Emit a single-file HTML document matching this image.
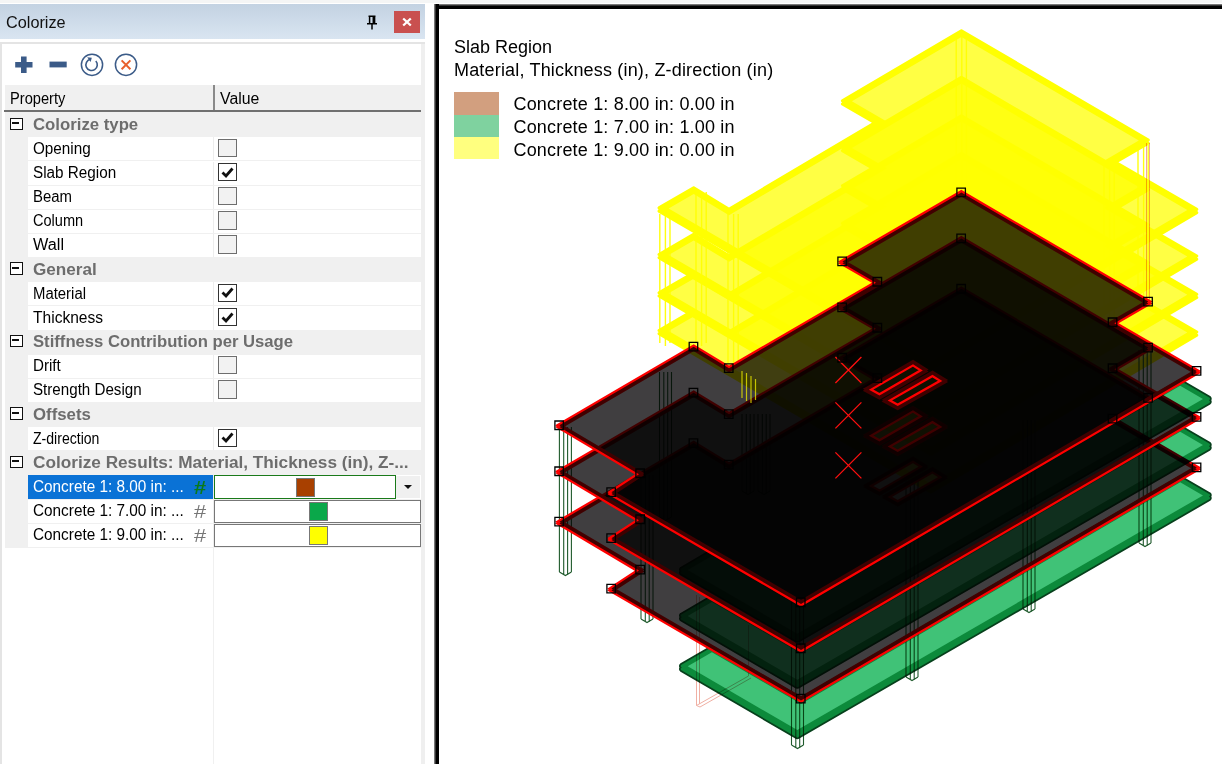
<!DOCTYPE html>
<html><head><meta charset="utf-8"><title>Colorize</title>
<style>
html,body{margin:0;padding:0}
body{width:1222px;height:764px;overflow:hidden;background:#fff;position:relative;font-family:"Liberation Sans",sans-serif;color:#000}
.topstrip{position:absolute;left:0;top:0;width:1222px;height:3px;background:#f4f5f5}
.title{position:absolute;left:0;top:4px;width:425px;height:35px;background:linear-gradient(#c3d2e2,#d9e5f1)}
.title .t{position:absolute;top:9.5px;font-size:16px;line-height:18px;color:#111;transform-origin:0 0;white-space:nowrap}
.close{position:absolute;left:394px;top:7px;width:26px;height:22px;background:#c9504f}
.close svg{position:absolute;left:8px;top:6px}
.pin{position:absolute;left:366px;top:11px}
.panel{position:absolute;left:0;top:42px;width:425px;height:722px;background:#fff;border-left:2px solid #e4e4e4;border-top:2px solid #e4e4e4;box-sizing:border-box}
.panel .rb{position:absolute;left:421px;top:42px;width:4px;height:722px;background:#ececec}
.tb{position:absolute;top:0;left:0}
.hdr{position:absolute;left:5px;top:85px;width:416px;height:28.5px;background:#f0f0f0}
.hdr span{position:absolute;top:4.5px;font-size:16px;line-height:18px;transform-origin:0 0;white-space:nowrap}
.hline{position:absolute;left:4px;top:110.3px;width:417px;height:2px;background:#707070}
.hsep{position:absolute;left:213px;top:85px;width:1.5px;height:26px;background:#8a8a8a}
.gutter{position:absolute;left:5px;top:112px;width:23px;height:436px;background:#f0f0f0}
.vsep{position:absolute;left:213px;top:548px;width:1px;height:217px;background:#f0f0f0}
.row.prop:before{content:'';position:absolute;left:185px;top:0;width:1px;height:100%;background:#ededed}
.row{position:absolute;left:5px;width:416px;box-sizing:border-box}
.row.cat{background:#f0f0f0}
.row.prop{left:28px;width:393px;border-bottom:1px solid #f0f0f0;background:#fff}
.exp{position:absolute;left:5px;top:4.4px;width:12.5px;height:12.5px;border:1.8px solid #111;box-sizing:border-box;background:#fff}
.exp i{position:absolute;left:1.4px;top:3.4px;width:6.4px;height:2px;background:#111}
.ct{position:absolute;top:2.9px;font-size:16px;line-height:18px;font-weight:bold;color:#6d6d6d;white-space:nowrap;transform-origin:0 0}
.pn{position:absolute;top:2.4px;font-size:16px;line-height:18px;white-space:nowrap;transform-origin:0 0}
.cb{position:absolute;left:190.3px;top:1.5px;width:18.5px;height:18.3px;box-sizing:border-box;border:1.5px solid #6e6e6e;background:#f2f2f2}
.cb.on{background:#fff;border-color:#333}
.cb svg{position:absolute;left:-1.3px;top:-1.3px}
.vline{position:absolute;left:185px;top:0;width:1px;height:100%;background:#e8e8e8}
.col.sel{background:linear-gradient(90deg,#0a72d6 185px,#fff 185px)}
.col.sel .pn{color:#fff}
.hash{position:absolute;left:165.5px;top:1.5px;font-size:19px;line-height:21px;color:#777;transform:scaleX(1.15);transform-origin:0 0}
.col.sel .hash{color:#0a7a1a;font-weight:bold}
.cbox{position:absolute;left:186px;top:0;width:207px;height:23.5px;box-sizing:border-box;border:1.5px solid #777;background:#fff}
.col.sel .cbox{width:182px;border-color:#1a7a1a;border-width:1.5px}
.cbox b{position:absolute;left:93.5px;top:1.2px;width:19.5px;height:19.3px;border:1px solid #777;box-sizing:border-box}
.col.sel .cbox b{left:81px;width:19px}
.dd{position:absolute;left:368px;top:1px;width:24px;height:22px;background:#f0f0f0}
.dd:after{content:"";position:absolute;left:8px;top:9px;border:4px solid transparent;border-top:4.5px solid #111;border-bottom:0}
.view{position:absolute;left:434px;top:4px;width:788px;height:760px;background:#fff;box-sizing:border-box}
.vb1{position:absolute;left:434px;top:4px;width:788px;height:5px;background:linear-gradient(#9a9a9a,#000 45%)}
.vb2{position:absolute;left:434px;top:4px;width:5px;height:760px;background:linear-gradient(90deg,#9a9a9a,#000 45%)}
.legend{position:absolute;font-size:18px;white-space:nowrap;color:#000}
.sw{position:absolute;left:454px;width:45px}
svg.model{position:absolute;left:439px;top:9px}
.mul{mix-blend-mode:multiply}
</style></head><body>
<div class="topstrip"></div>
<div class="title"><span class="t" style="left:5.7px;transform:scaleX(1.016)">Colorize</span>
 <svg class="pin" width="12" height="16" viewBox="0 0 12 16"><path d="M2.5 1.2h7M3.6 1.2v7.3M8.6 1.2v7.3M7.3 1.2v7.3M1 8.8h10M6 9v5.5" stroke="#000" stroke-width="1.5" fill="none"/></svg>
 <div class="close"><svg width="10" height="10" viewBox="0 0 10 10"><path d="M1.2 1.5L8.8 8.5M8.8 1.5L1.2 8.5" stroke="#fff" stroke-width="2.3"/></svg></div>
</div>
<div class="panel"></div><div class="rb" style="position:absolute;left:421px;top:44px;width:4px;height:720px;background:#efefef"></div>
<svg class="tb" width="160" height="84" viewBox="0 0 160 84">
 <path d="M21 56.5h5.6v5.4h5.9v5.6h-5.9v5.5H21v-5.5h-5.8v-5.6H21z" fill="#3b5b88"/>
 <rect x="49.5" y="61.6" width="17.2" height="5.8" fill="#3b5b88"/>
 <circle cx="92" cy="64.8" r="10.6" fill="#fff" stroke="#3b5b88" stroke-width="1.5"/>
 <path d="M90.2 59.3a5.7 5.7 0 1 0 5.6 1.7" fill="none" stroke="#3b5b88" stroke-width="1.6"/>
 <path d="M87.2 57.2l4.6 .6-1.2 4.2z" fill="#3b5b88"/>
 <circle cx="126" cy="64.8" r="10.6" fill="#fff" stroke="#3b5b88" stroke-width="1.5"/>
 <path d="M121.6 60.4l8.8 8.8M130.4 60.4l-8.8 8.8" stroke="#e8602c" stroke-width="2"/>
</svg>
<div class="hdr"><span style="left:4.5px;transform:scaleX(0.916)">Property</span><span style="left:215.1px;transform:scaleX(0.989)">Value</span></div>
<div class="hsep"></div><div class="hline"></div>
<div class="gutter"></div>
<div class="row cat" style="top:113.2px;height:24.15px"><span class="exp"><i></i></span><span class="ct" style="left:28.0px;transform:scaleX(1.047)">Colorize type</span></div>
<div class="row prop" style="top:137.35px;height:24.15px"><span class="pn" style="left:5.0px;transform:scaleX(0.954)">Opening</span><span class="cb"></span></div>
<div class="row prop" style="top:161.5px;height:24.15px"><span class="pn" style="left:5.0px;transform:scaleX(0.954)">Slab Region</span><span class="cb on"><svg width="19" height="19" viewBox="0 0 19 19"><path d="M4.5 9.5 L8 13 L14.5 5.5" fill="none" stroke="#111" stroke-width="2.8"/></svg></span></div>
<div class="row prop" style="top:185.65px;height:24.15px"><span class="pn" style="left:5.0px;transform:scaleX(0.933)">Beam</span><span class="cb"></span></div>
<div class="row prop" style="top:209.8px;height:24.15px"><span class="pn" style="left:5.0px;transform:scaleX(0.910)">Column</span><span class="cb"></span></div>
<div class="row prop" style="top:233.95px;height:24.15px"><span class="pn" style="left:5.0px;transform:scaleX(1.016)">Wall</span><span class="cb"></span></div>
<div class="row cat" style="top:258.1px;height:24.15px"><span class="exp"><i></i></span><span class="ct" style="left:28.0px;transform:scaleX(1.071)">General</span></div>
<div class="row prop" style="top:282.25px;height:24.15px"><span class="pn" style="left:5.0px;transform:scaleX(0.931)">Material</span><span class="cb on"><svg width="19" height="19" viewBox="0 0 19 19"><path d="M4.5 9.5 L8 13 L14.5 5.5" fill="none" stroke="#111" stroke-width="2.8"/></svg></span></div>
<div class="row prop" style="top:306.4px;height:24.15px"><span class="pn" style="left:5.0px;transform:scaleX(0.973)">Thickness</span><span class="cb on"><svg width="19" height="19" viewBox="0 0 19 19"><path d="M4.5 9.5 L8 13 L14.5 5.5" fill="none" stroke="#111" stroke-width="2.8"/></svg></span></div>
<div class="row cat" style="top:330.55px;height:24.15px"><span class="exp"><i></i></span><span class="ct" style="left:28.0px;transform:scaleX(1.041)">Stiffness Contribution per Usage</span></div>
<div class="row prop" style="top:354.7px;height:24.15px"><span class="pn" style="left:5.0px;transform:scaleX(0.948)">Drift</span><span class="cb"></span></div>
<div class="row prop" style="top:378.85px;height:24.15px"><span class="pn" style="left:5.0px;transform:scaleX(0.947)">Strength Design</span><span class="cb"></span></div>
<div class="row cat" style="top:403.0px;height:24.15px"><span class="exp"><i></i></span><span class="ct" style="left:28.0px;transform:scaleX(1.050)">Offsets</span></div>
<div class="row prop" style="top:427.15px;height:24.15px"><span class="pn" style="left:5.0px;transform:scaleX(0.879)">Z-direction</span><span class="cb on"><svg width="19" height="19" viewBox="0 0 19 19"><path d="M4.5 9.5 L8 13 L14.5 5.5" fill="none" stroke="#111" stroke-width="2.8"/></svg></span></div>
<div class="row cat" style="top:451.3px;height:24.15px"><span class="exp"><i></i></span><span class="ct" style="left:28.0px;transform:scaleX(1.075)">Colorize Results: Material, Thickness (in), Z-...</span></div>
<div class="row prop col sel" style="top:475.45px;height:24.15px"><span class="pn" style="left:5.0px;transform:scaleX(0.958)">Concrete 1: 8.00 in: ...</span><span class="hash">#</span><span class="cbox"><b style="background:#a84000"></b></span><span class="dd"></span></div>
<div class="row prop col" style="top:499.6px;height:24.15px"><span class="pn" style="left:5.0px;transform:scaleX(0.958)">Concrete 1: 7.00 in: ...</span><span class="hash">#</span><span class="cbox"><b style="background:#0aa84a"></b></span></div>
<div class="row prop col" style="top:523.75px;height:24.15px"><span class="pn" style="left:5.0px;transform:scaleX(0.958)">Concrete 1: 9.00 in: ...</span><span class="hash">#</span><span class="cbox"><b style="background:#ffff00"></b></span></div>
<div class="vsep"></div>
<div class="view"></div>
<svg class="model" width="783" height="755" viewBox="439 9 783 755">
<g>
<path d="M659.8 214.0 V343.0M665.4 214.0 V346.0M670.0 214.0 V343.0" fill="none" stroke="#ffff10" stroke-width="1.4"/>
<path d="M696.0 192.0 V343.0M701.6 192.0 V346.0M706.2 192.0 V343.0" fill="none" stroke="#ffff10" stroke-width="1.4"/>
<path d="M728.0 214.0 V363.0M733.6 214.0 V366.0M738.2 214.0 V363.0" fill="none" stroke="#ffff10" stroke-width="1.4"/>
<path d="M956.2 36.0 V187.0M961.8 36.0 V190.0M966.4 36.0 V187.0" fill="none" stroke="#ffff10" stroke-width="1.4"/>
<path d="M1104.0 165.0 V319.0M1109.6 165.0 V322.0M1114.2 165.0 V319.0" fill="none" stroke="#ffff10" stroke-width="1.4"/>
<path d="M1138.0 145.0 V297.0M1143.6 145.0 V300.0M1148.2 145.0 V297.0" fill="none" stroke="#ffff10" stroke-width="1.4"/>
</g>
<path d="M1146.5 143V300M1149.5 143V300" stroke="#f4a6a0" stroke-width="1" fill="none"/>
<path d="M696.5 595V705.5L748.5 676V625M699.5 597V704M696.5 705.5l3.5 1.5l51-29" stroke="#f0b0a4" stroke-width="1" fill="none"/>
<g>
<g class="mul" transform="translate(0,-39.0)"><path d="M1149.1 302.9 L1149.5 302.5 L1149.8 301.9 L1149.8 301.3 L1149.5 300.7 L1149.1 300.3 L962.2 191.1 L961.7 190.9 L961.1 190.9 L960.6 191.1 L841.6 261.1 L841.2 261.5 L840.9 262.1 L840.9 262.7 L841.2 263.3 L841.6 263.7 L842.2 264.0 L841.6 264.3 L841.2 264.7 L840.9 265.3 L840.9 265.9 L841.2 266.5 L841.6 266.9 L871.9 284.4 L729.0 369.0 L694.5 348.1 L694.0 347.9 L693.4 347.9 L692.9 348.1 L658.2 368.2 L657.8 368.6 L657.5 369.2 L657.5 369.8 L657.8 370.4 L658.2 370.8 L658.8 371.1 L658.2 371.4 L657.8 371.8 L657.5 372.4 L657.5 373.0 L657.8 373.6 L658.2 374.0 L930.1 532.4 L930.6 532.6 L931.2 532.6 L931.7 532.4 L1197.6 375.5 L1198.0 375.1 L1198.3 374.5 L1198.3 373.9 L1198.0 373.3 L1197.6 372.9 L1197.0 372.6 L1197.6 372.3 L1198.0 371.9 L1198.3 371.3 L1198.3 370.7 L1198.0 370.1 L1197.6 369.7 L1118.5 323.9 L1149.1 306.1 L1149.5 305.7 L1149.8 305.1 L1149.8 304.5 L1149.5 303.9 L1149.1 303.5 L1148.5 303.2Z" fill="#ffff00"/><path d="M961.4 198.5 L851.9 262.9 L887.1 283.3 L729.0 376.8 L693.7 355.5 L668.6 370.0 L930.9 522.8 L1187.3 371.5 L1103.3 322.8 L1138.8 302.1Z" fill="#ffff44"/></g>
<g class="mul" transform="translate(0,-76.7)"><path d="M1149.1 302.9 L1149.5 302.5 L1149.8 301.9 L1149.8 301.3 L1149.5 300.7 L1149.1 300.3 L962.2 191.1 L961.7 190.9 L961.1 190.9 L960.6 191.1 L841.6 261.1 L841.2 261.5 L840.9 262.1 L840.9 262.7 L841.2 263.3 L841.6 263.7 L842.2 264.0 L841.6 264.3 L841.2 264.7 L840.9 265.3 L840.9 265.9 L841.2 266.5 L841.6 266.9 L871.9 284.4 L729.0 369.0 L694.5 348.1 L694.0 347.9 L693.4 347.9 L692.9 348.1 L658.2 368.2 L657.8 368.6 L657.5 369.2 L657.5 369.8 L657.8 370.4 L658.2 370.8 L658.8 371.1 L658.2 371.4 L657.8 371.8 L657.5 372.4 L657.5 373.0 L657.8 373.6 L658.2 374.0 L930.1 532.4 L930.6 532.6 L931.2 532.6 L931.7 532.4 L1197.6 375.5 L1198.0 375.1 L1198.3 374.5 L1198.3 373.9 L1198.0 373.3 L1197.6 372.9 L1197.0 372.6 L1197.6 372.3 L1198.0 371.9 L1198.3 371.3 L1198.3 370.7 L1198.0 370.1 L1197.6 369.7 L1118.5 323.9 L1149.1 306.1 L1149.5 305.7 L1149.8 305.1 L1149.8 304.5 L1149.5 303.9 L1149.1 303.5 L1148.5 303.2Z" fill="#ffff00"/><path d="M961.4 198.5 L851.9 262.9 L887.1 283.3 L729.0 376.8 L693.7 355.5 L668.6 370.0 L930.9 522.8 L1187.3 371.5 L1103.3 322.8 L1138.8 302.1Z" fill="#ffff44"/></g>
<g class="mul" transform="translate(0,-115.0)"><path d="M1149.1 302.9 L1149.5 302.5 L1149.8 301.9 L1149.8 301.3 L1149.5 300.7 L1149.1 300.3 L962.2 191.1 L961.7 190.9 L961.1 190.9 L960.6 191.1 L841.6 261.1 L841.2 261.5 L840.9 262.1 L840.9 262.7 L841.2 263.3 L841.6 263.7 L842.2 264.0 L841.6 264.3 L841.2 264.7 L840.9 265.3 L840.9 265.9 L841.2 266.5 L841.6 266.9 L871.9 284.4 L729.0 369.0 L694.5 348.1 L694.0 347.9 L693.4 347.9 L692.9 348.1 L658.2 368.2 L657.8 368.6 L657.5 369.2 L657.5 369.8 L657.8 370.4 L658.2 370.8 L658.8 371.1 L658.2 371.4 L657.8 371.8 L657.5 372.4 L657.5 373.0 L657.8 373.6 L658.2 374.0 L930.1 532.4 L930.6 532.6 L931.2 532.6 L931.7 532.4 L1197.6 375.5 L1198.0 375.1 L1198.3 374.5 L1198.3 373.9 L1198.0 373.3 L1197.6 372.9 L1197.0 372.6 L1197.6 372.3 L1198.0 371.9 L1198.3 371.3 L1198.3 370.7 L1198.0 370.1 L1197.6 369.7 L1118.5 323.9 L1149.1 306.1 L1149.5 305.7 L1149.8 305.1 L1149.8 304.5 L1149.5 303.9 L1149.1 303.5 L1148.5 303.2Z" fill="#ffff00"/><path d="M961.4 198.5 L851.9 262.9 L887.1 283.3 L729.0 376.8 L693.7 355.5 L668.6 370.0 L930.9 522.8 L1187.3 371.5 L1103.3 322.8 L1138.8 302.1Z" fill="#ffff44"/></g>
<g class="mul" transform="translate(0,-161.6)"><path d="M1149.1 302.9 L1149.5 302.5 L1149.8 301.9 L1149.8 301.3 L1149.5 300.7 L1149.1 300.3 L962.2 191.1 L961.7 190.9 L961.1 190.9 L960.6 191.1 L841.6 261.1 L841.2 261.5 L840.9 262.1 L840.9 262.7 L841.2 263.3 L841.6 263.7 L842.2 264.0 L841.6 264.3 L841.2 264.7 L840.9 265.3 L840.9 265.9 L841.2 266.5 L841.6 266.9 L871.9 284.4 L729.0 369.0 L694.5 348.1 L694.0 347.9 L693.4 347.9 L692.9 348.1 L658.2 368.2 L657.8 368.6 L657.5 369.2 L657.5 369.8 L657.8 370.4 L658.2 370.8 L658.8 371.1 L658.2 371.4 L657.8 371.8 L657.5 372.4 L657.5 373.0 L657.8 373.6 L658.2 374.0 L930.1 532.4 L930.6 532.6 L931.2 532.6 L931.7 532.4 L1197.6 375.5 L1198.0 375.1 L1198.3 374.5 L1198.3 373.9 L1198.0 373.3 L1197.6 372.9 L1197.0 372.6 L1197.6 372.3 L1198.0 371.9 L1198.3 371.3 L1198.3 370.7 L1198.0 370.1 L1197.6 369.7 L1118.5 323.9 L1149.1 306.1 L1149.5 305.7 L1149.8 305.1 L1149.8 304.5 L1149.5 303.9 L1149.1 303.5 L1148.5 303.2Z" fill="#ffff00"/><path d="M961.4 198.5 L851.9 262.9 L887.1 283.3 L729.0 376.8 L693.7 355.5 L668.6 370.0 L930.9 522.8 L1187.3 371.5 L1103.3 322.8 L1138.8 302.1Z" fill="#ffff44"/></g>
</g>
<g>
<path d="M559.4 427.0 V572.0M563.7 427.0 V575.0M567.6 427.0 V575.0M571.4 427.0 V572.0M559.4 572.0 l6.0 3.5 l6.0 -3.5" fill="none" stroke="#1f5a2c" stroke-width="1.1"/>
<path d="M641.0 475.0 V619.0M645.3 475.0 V622.0M649.2 475.0 V622.0M653.0 475.0 V619.0M641.0 619.0 l6.0 3.5 l6.0 -3.5" fill="none" stroke="#1f5a2c" stroke-width="1.1"/>
<path d="M791.5 602.0 V745.0M795.8 602.0 V748.0M799.7 602.0 V748.0M803.5 602.0 V745.0M791.5 745.0 l6.0 3.5 l6.0 -3.5" fill="none" stroke="#1f5a2c" stroke-width="1.1"/>
<path d="M906.0 480.0 V677.0M910.3 480.0 V680.0M914.2 480.0 V680.0M918.0 480.0 V677.0M906.0 677.0 l6.0 3.5 l6.0 -3.5" fill="none" stroke="#1f5a2c" stroke-width="1.1"/>
<path d="M1023.0 420.0 V609.0M1027.3 420.0 V612.0M1031.2 420.0 V612.0M1035.0 420.0 V609.0M1023.0 609.0 l6.0 3.5 l6.0 -3.5" fill="none" stroke="#1f5a2c" stroke-width="1.1"/>
<path d="M1139.0 350.0 V543.0M1143.3 350.0 V546.0M1147.2 350.0 V546.0M1151.0 350.0 V543.0M1139.0 543.0 l6.0 3.5 l6.0 -3.5" fill="none" stroke="#1f5a2c" stroke-width="1.1"/>
<path d="M659.5 372.0 V517.0M663.8 372.0 V520.0M667.7 372.0 V520.0M671.5 372.0 V517.0M659.5 517.0 l6.0 3.5 l6.0 -3.5" fill="none" stroke="#1f5a2c" stroke-width="1.1"/>
<path d="M742.0 414.0 V491.0M746.3 414.0 V494.0M750.2 414.0 V494.0M754.0 414.0 V491.0M742.0 491.0 l6.0 3.5 l6.0 -3.5" fill="none" stroke="#1f5a2c" stroke-width="1.1"/>
<path d="M758.0 414.0 V491.0M762.3 414.0 V494.0M766.2 414.0 V494.0M770.0 414.0 V491.0M758.0 491.0 l6.0 3.5 l6.0 -3.5" fill="none" stroke="#1f5a2c" stroke-width="1.1"/>
</g>
<g class="mul" transform="translate(0,96.4)"><path d="M679.4 571.1 L679.2 571.6 L679.0 572.3 L679.0 572.9 L679.2 573.6 L679.4 574.1 L679.8 574.7 L680.2 575.1 L680.5 575.3 L795.7 642.4 L796.0 642.5 L796.5 642.7 L797.1 642.8 L797.5 642.8 L798.1 642.7 L798.6 642.5 L798.9 642.4 L1210.2 404.4 L1210.4 404.2 L1210.9 403.8 L1211.3 403.2 L1211.5 402.7 L1211.7 402.0 L1211.7 401.4 L1211.5 400.7 L1211.3 400.2 L1211.5 399.7 L1211.7 399.0 L1211.7 398.4 L1211.5 397.7 L1211.3 397.2 L1210.9 396.6 L1210.4 396.2 L1210.2 396.0 L1181.8 379.5 L1181.5 379.4 L1181.0 379.2 L1180.4 379.1 L1180.0 379.1 L1179.4 379.2 L1178.9 379.4 L1178.6 379.5 L801.0 600.3 L713.5 549.6 L713.2 549.5 L712.7 549.3 L712.1 549.2 L711.7 549.2 L711.1 549.3 L710.6 549.5 L710.3 549.6 L680.5 566.9 L680.2 567.1 L679.8 567.5 L679.4 568.1 L679.2 568.6 L679.0 569.3 L679.0 569.9 L679.2 570.6Z" fill="#07401c"/><path d="M681.9 571.1 L681.4 571.4 L681.4 571.4 L681.4 571.4 L680.9 571.8 L680.9 571.8 L680.9 571.8 L680.9 571.8 L680.9 571.8 L680.7 572.3 L680.7 572.3 L680.7 572.3 L680.7 572.3 L680.7 572.3 L680.7 572.9 L680.7 572.9 L680.7 572.9 L680.7 572.9 L680.7 572.9 L680.9 573.4 L680.9 573.4 L680.9 573.4 L680.9 573.4 L680.9 573.4 L681.4 573.8 L681.4 573.8 L681.4 573.8 L796.6 640.9 L796.6 640.9 L796.6 640.9 L797.1 641.1 L797.1 641.1 L797.1 641.1 L797.1 641.1 L797.1 641.1 L797.5 641.1 L797.5 641.1 L797.5 641.1 L797.5 641.1 L797.5 641.1 L798.0 640.9 L798.0 640.9 L798.0 640.9 L1209.3 402.9 L1209.3 402.9 L1209.3 402.9 L1209.7 402.5 L1209.7 402.5 L1209.7 402.5 L1209.7 402.5 L1209.7 402.5 L1210.0 402.0 L1210.0 402.0 L1210.0 402.0 L1210.0 402.0 L1210.0 402.0 L1210.0 401.4 L1210.0 401.4 L1210.0 401.4 L1210.0 401.4 L1210.0 401.4 L1209.8 400.9 L1209.7 400.9 L1209.7 400.9 L1209.7 400.9 L1209.7 400.9 L1209.3 400.5 L1209.3 400.5 L1209.3 400.5 L1208.8 400.2 L1209.3 399.9 L1209.3 399.9 L1209.3 399.9 L1209.7 399.5 L1209.7 399.5 L1209.7 399.5 L1209.7 399.5 L1209.7 399.5 L1210.0 399.0 L1210.0 399.0 L1210.0 399.0 L1210.0 399.0 L1210.0 399.0 L1210.0 398.4 L1210.0 398.4 L1210.0 398.4 L1210.0 398.4 L1210.0 398.4 L1209.8 397.9 L1209.7 397.9 L1209.7 397.9 L1209.7 397.9 L1209.7 397.9 L1209.3 397.5 L1209.3 397.5 L1209.3 397.5 L1180.9 381.0 L1180.9 381.0 L1180.9 381.0 L1180.4 380.8 L1180.4 380.8 L1180.4 380.8 L1180.4 380.8 L1180.4 380.8 L1180.0 380.8 L1180.0 380.8 L1180.0 380.8 L1180.0 380.8 L1180.0 380.8 L1179.5 381.0 L1179.5 381.0 L1179.5 381.0 L801.0 602.3 L712.6 551.1 L712.6 551.1 L712.6 551.1 L712.1 550.9 L712.1 550.9 L712.1 550.9 L712.1 550.9 L712.1 550.9 L711.7 550.9 L711.7 550.9 L711.7 550.9 L711.7 550.9 L711.7 550.9 L711.2 551.1 L711.2 551.1 L711.2 551.1 L681.4 568.4 L681.4 568.4 L681.4 568.4 L680.9 568.8 L680.9 568.8 L680.9 568.8 L680.9 568.8 L680.9 568.8 L680.7 569.3 L680.7 569.3 L680.7 569.3 L680.7 569.3 L680.7 569.3 L680.7 569.9 L680.7 569.9 L680.7 569.9 L680.7 569.9 L680.7 569.9 L680.9 570.4 L680.9 570.4 L680.9 570.4 L680.9 570.4 L680.9 570.4 L681.4 570.8 L681.4 570.8 L681.4 570.8Z" fill="#0c8a3b"/><path d="M687.7 569.9 L797.3 633.7 L1203.0 399.0 L1180.2 385.8 L801.0 607.5 L711.9 555.9Z" fill="#40c277"/></g>
<g transform="translate(0,96.4)"><path d="M961.4 192.4 L1148.3 301.6 L1112.8 322.3 L1196.8 371.0 L801.0 602.3 L611.4 492.2 L640.4 473.3 L559.4 425.3 L693.7 346.7 L729.0 368.2 L877.6 281.8 L842.4 261.4ZM867.3 388.8 L913.0 362.4 L924.3 369.5 L879.5 395.4ZM886.1 399.6 L932.5 373.0 L943.8 380.0 L897.7 406.0ZM961.4 194.2 L1148.3 303.4 L1112.8 324.1 L1196.8 372.8 L801.0 604.1 L611.4 494.0 L640.4 475.1 L559.4 427.1 L693.7 348.5 L729.0 370.0 L877.6 283.6 L842.4 263.2ZM867.3 390.6 L913.0 364.2 L924.3 371.3 L879.5 397.2ZM886.1 401.4 L932.5 374.8 L943.8 381.8 L897.7 407.8Z" fill="none" stroke="#ff0000" stroke-width="4.4" stroke-linejoin="miter"/></g>
<g class="mul" transform="translate(0,96.4)"><path d="M1148.3 301.6 L961.4 192.4 L842.4 261.4 L844.0 262.3 L842.4 263.2 L876.0 282.7 L729.0 368.2 L693.7 346.7 L559.4 425.3 L560.9 426.2 L559.4 427.1 L639.0 474.2 L611.4 492.2 L612.9 493.0 L611.4 494.0 L801.0 604.1 L1196.8 372.8 L1195.3 371.9 L1196.8 371.0 L1114.3 323.2 L1148.3 303.4 L1146.8 302.5ZM879.5 395.4 L868.9 389.7 L913.0 364.2 L922.8 370.4ZM897.7 406.0 L887.7 400.5 L932.5 374.8 L942.3 380.9Z" fill="#403e40" fill-rule="evenodd"/></g>
<g class="mul" transform="translate(0,46.0)"><path d="M679.4 571.1 L679.2 571.6 L679.0 572.3 L679.0 572.9 L679.2 573.6 L679.4 574.1 L679.8 574.7 L680.2 575.1 L680.5 575.3 L795.7 642.4 L796.0 642.5 L796.5 642.7 L797.1 642.8 L797.5 642.8 L798.1 642.7 L798.6 642.5 L798.9 642.4 L1210.2 404.4 L1210.4 404.2 L1210.9 403.8 L1211.3 403.2 L1211.5 402.7 L1211.7 402.0 L1211.7 401.4 L1211.5 400.7 L1211.3 400.2 L1211.5 399.7 L1211.7 399.0 L1211.7 398.4 L1211.5 397.7 L1211.3 397.2 L1210.9 396.6 L1210.4 396.2 L1210.2 396.0 L1181.8 379.5 L1181.5 379.4 L1181.0 379.2 L1180.4 379.1 L1180.0 379.1 L1179.4 379.2 L1178.9 379.4 L1178.6 379.5 L801.0 600.3 L713.5 549.6 L713.2 549.5 L712.7 549.3 L712.1 549.2 L711.7 549.2 L711.1 549.3 L710.6 549.5 L710.3 549.6 L680.5 566.9 L680.2 567.1 L679.8 567.5 L679.4 568.1 L679.2 568.6 L679.0 569.3 L679.0 569.9 L679.2 570.6Z" fill="#07401c"/><path d="M681.9 571.1 L681.4 571.4 L681.4 571.4 L681.4 571.4 L680.9 571.8 L680.9 571.8 L680.9 571.8 L680.9 571.8 L680.9 571.8 L680.7 572.3 L680.7 572.3 L680.7 572.3 L680.7 572.3 L680.7 572.3 L680.7 572.9 L680.7 572.9 L680.7 572.9 L680.7 572.9 L680.7 572.9 L680.9 573.4 L680.9 573.4 L680.9 573.4 L680.9 573.4 L680.9 573.4 L681.4 573.8 L681.4 573.8 L681.4 573.8 L796.6 640.9 L796.6 640.9 L796.6 640.9 L797.1 641.1 L797.1 641.1 L797.1 641.1 L797.1 641.1 L797.1 641.1 L797.5 641.1 L797.5 641.1 L797.5 641.1 L797.5 641.1 L797.5 641.1 L798.0 640.9 L798.0 640.9 L798.0 640.9 L1209.3 402.9 L1209.3 402.9 L1209.3 402.9 L1209.7 402.5 L1209.7 402.5 L1209.7 402.5 L1209.7 402.5 L1209.7 402.5 L1210.0 402.0 L1210.0 402.0 L1210.0 402.0 L1210.0 402.0 L1210.0 402.0 L1210.0 401.4 L1210.0 401.4 L1210.0 401.4 L1210.0 401.4 L1210.0 401.4 L1209.8 400.9 L1209.7 400.9 L1209.7 400.9 L1209.7 400.9 L1209.7 400.9 L1209.3 400.5 L1209.3 400.5 L1209.3 400.5 L1208.8 400.2 L1209.3 399.9 L1209.3 399.9 L1209.3 399.9 L1209.7 399.5 L1209.7 399.5 L1209.7 399.5 L1209.7 399.5 L1209.7 399.5 L1210.0 399.0 L1210.0 399.0 L1210.0 399.0 L1210.0 399.0 L1210.0 399.0 L1210.0 398.4 L1210.0 398.4 L1210.0 398.4 L1210.0 398.4 L1210.0 398.4 L1209.8 397.9 L1209.7 397.9 L1209.7 397.9 L1209.7 397.9 L1209.7 397.9 L1209.3 397.5 L1209.3 397.5 L1209.3 397.5 L1180.9 381.0 L1180.9 381.0 L1180.9 381.0 L1180.4 380.8 L1180.4 380.8 L1180.4 380.8 L1180.4 380.8 L1180.4 380.8 L1180.0 380.8 L1180.0 380.8 L1180.0 380.8 L1180.0 380.8 L1180.0 380.8 L1179.5 381.0 L1179.5 381.0 L1179.5 381.0 L801.0 602.3 L712.6 551.1 L712.6 551.1 L712.6 551.1 L712.1 550.9 L712.1 550.9 L712.1 550.9 L712.1 550.9 L712.1 550.9 L711.7 550.9 L711.7 550.9 L711.7 550.9 L711.7 550.9 L711.7 550.9 L711.2 551.1 L711.2 551.1 L711.2 551.1 L681.4 568.4 L681.4 568.4 L681.4 568.4 L680.9 568.8 L680.9 568.8 L680.9 568.8 L680.9 568.8 L680.9 568.8 L680.7 569.3 L680.7 569.3 L680.7 569.3 L680.7 569.3 L680.7 569.3 L680.7 569.9 L680.7 569.9 L680.7 569.9 L680.7 569.9 L680.7 569.9 L680.9 570.4 L680.9 570.4 L680.9 570.4 L680.9 570.4 L680.9 570.4 L681.4 570.8 L681.4 570.8 L681.4 570.8Z" fill="#0c8a3b"/><path d="M687.7 569.9 L797.3 633.7 L1203.0 399.0 L1180.2 385.8 L801.0 607.5 L711.9 555.9Z" fill="#40c277"/></g>
<g transform="translate(0,46.0)"><path d="M961.4 192.4 L1148.3 301.6 L1112.8 322.3 L1196.8 371.0 L801.0 602.3 L611.4 492.2 L640.4 473.3 L559.4 425.3 L693.7 346.7 L729.0 368.2 L877.6 281.8 L842.4 261.4ZM867.3 388.8 L913.0 362.4 L924.3 369.5 L879.5 395.4ZM886.1 399.6 L932.5 373.0 L943.8 380.0 L897.7 406.0ZM961.4 194.2 L1148.3 303.4 L1112.8 324.1 L1196.8 372.8 L801.0 604.1 L611.4 494.0 L640.4 475.1 L559.4 427.1 L693.7 348.5 L729.0 370.0 L877.6 283.6 L842.4 263.2ZM867.3 390.6 L913.0 364.2 L924.3 371.3 L879.5 397.2ZM886.1 401.4 L932.5 374.8 L943.8 381.8 L897.7 407.8Z" fill="none" stroke="#ff0000" stroke-width="4.4" stroke-linejoin="miter"/></g>
<g class="mul" transform="translate(0,46.0)"><path d="M1148.3 301.6 L961.4 192.4 L842.4 261.4 L844.0 262.3 L842.4 263.2 L876.0 282.7 L729.0 368.2 L693.7 346.7 L559.4 425.3 L560.9 426.2 L559.4 427.1 L639.0 474.2 L611.4 492.2 L612.9 493.0 L611.4 494.0 L801.0 604.1 L1196.8 372.8 L1195.3 371.9 L1196.8 371.0 L1114.3 323.2 L1148.3 303.4 L1146.8 302.5ZM879.5 395.4 L868.9 389.7 L913.0 364.2 L922.8 370.4ZM897.7 406.0 L887.7 400.5 L932.5 374.8 L942.3 380.9Z" fill="#403e40" fill-rule="evenodd"/></g>
<g class="mul" transform="translate(0,0.0)"><path d="M679.4 571.1 L679.2 571.6 L679.0 572.3 L679.0 572.9 L679.2 573.6 L679.4 574.1 L679.8 574.7 L680.2 575.1 L680.5 575.3 L795.7 642.4 L796.0 642.5 L796.5 642.7 L797.1 642.8 L797.5 642.8 L798.1 642.7 L798.6 642.5 L798.9 642.4 L1210.2 404.4 L1210.4 404.2 L1210.9 403.8 L1211.3 403.2 L1211.5 402.7 L1211.7 402.0 L1211.7 401.4 L1211.5 400.7 L1211.3 400.2 L1211.5 399.7 L1211.7 399.0 L1211.7 398.4 L1211.5 397.7 L1211.3 397.2 L1210.9 396.6 L1210.4 396.2 L1210.2 396.0 L1181.8 379.5 L1181.5 379.4 L1181.0 379.2 L1180.4 379.1 L1180.0 379.1 L1179.4 379.2 L1178.9 379.4 L1178.6 379.5 L801.0 600.3 L713.5 549.6 L713.2 549.5 L712.7 549.3 L712.1 549.2 L711.7 549.2 L711.1 549.3 L710.6 549.5 L710.3 549.6 L680.5 566.9 L680.2 567.1 L679.8 567.5 L679.4 568.1 L679.2 568.6 L679.0 569.3 L679.0 569.9 L679.2 570.6Z" fill="#07401c"/><path d="M681.9 571.1 L681.4 571.4 L681.4 571.4 L681.4 571.4 L680.9 571.8 L680.9 571.8 L680.9 571.8 L680.9 571.8 L680.9 571.8 L680.7 572.3 L680.7 572.3 L680.7 572.3 L680.7 572.3 L680.7 572.3 L680.7 572.9 L680.7 572.9 L680.7 572.9 L680.7 572.9 L680.7 572.9 L680.9 573.4 L680.9 573.4 L680.9 573.4 L680.9 573.4 L680.9 573.4 L681.4 573.8 L681.4 573.8 L681.4 573.8 L796.6 640.9 L796.6 640.9 L796.6 640.9 L797.1 641.1 L797.1 641.1 L797.1 641.1 L797.1 641.1 L797.1 641.1 L797.5 641.1 L797.5 641.1 L797.5 641.1 L797.5 641.1 L797.5 641.1 L798.0 640.9 L798.0 640.9 L798.0 640.9 L1209.3 402.9 L1209.3 402.9 L1209.3 402.9 L1209.7 402.5 L1209.7 402.5 L1209.7 402.5 L1209.7 402.5 L1209.7 402.5 L1210.0 402.0 L1210.0 402.0 L1210.0 402.0 L1210.0 402.0 L1210.0 402.0 L1210.0 401.4 L1210.0 401.4 L1210.0 401.4 L1210.0 401.4 L1210.0 401.4 L1209.8 400.9 L1209.7 400.9 L1209.7 400.9 L1209.7 400.9 L1209.7 400.9 L1209.3 400.5 L1209.3 400.5 L1209.3 400.5 L1208.8 400.2 L1209.3 399.9 L1209.3 399.9 L1209.3 399.9 L1209.7 399.5 L1209.7 399.5 L1209.7 399.5 L1209.7 399.5 L1209.7 399.5 L1210.0 399.0 L1210.0 399.0 L1210.0 399.0 L1210.0 399.0 L1210.0 399.0 L1210.0 398.4 L1210.0 398.4 L1210.0 398.4 L1210.0 398.4 L1210.0 398.4 L1209.8 397.9 L1209.7 397.9 L1209.7 397.9 L1209.7 397.9 L1209.7 397.9 L1209.3 397.5 L1209.3 397.5 L1209.3 397.5 L1180.9 381.0 L1180.9 381.0 L1180.9 381.0 L1180.4 380.8 L1180.4 380.8 L1180.4 380.8 L1180.4 380.8 L1180.4 380.8 L1180.0 380.8 L1180.0 380.8 L1180.0 380.8 L1180.0 380.8 L1180.0 380.8 L1179.5 381.0 L1179.5 381.0 L1179.5 381.0 L801.0 602.3 L712.6 551.1 L712.6 551.1 L712.6 551.1 L712.1 550.9 L712.1 550.9 L712.1 550.9 L712.1 550.9 L712.1 550.9 L711.7 550.9 L711.7 550.9 L711.7 550.9 L711.7 550.9 L711.7 550.9 L711.2 551.1 L711.2 551.1 L711.2 551.1 L681.4 568.4 L681.4 568.4 L681.4 568.4 L680.9 568.8 L680.9 568.8 L680.9 568.8 L680.9 568.8 L680.9 568.8 L680.7 569.3 L680.7 569.3 L680.7 569.3 L680.7 569.3 L680.7 569.3 L680.7 569.9 L680.7 569.9 L680.7 569.9 L680.7 569.9 L680.7 569.9 L680.9 570.4 L680.9 570.4 L680.9 570.4 L680.9 570.4 L680.9 570.4 L681.4 570.8 L681.4 570.8 L681.4 570.8Z" fill="#0c8a3b"/><path d="M687.7 569.9 L797.3 633.7 L1203.0 399.0 L1180.2 385.8 L801.0 607.5 L711.9 555.9Z" fill="#40c277"/></g>
<g transform="translate(0,0.0)"><path d="M961.4 192.4 L1148.3 301.6 L1112.8 322.3 L1196.8 371.0 L801.0 602.3 L611.4 492.2 L640.4 473.3 L559.4 425.3 L693.7 346.7 L729.0 368.2 L877.6 281.8 L842.4 261.4ZM867.3 388.8 L913.0 362.4 L924.3 369.5 L879.5 395.4ZM886.1 399.6 L932.5 373.0 L943.8 380.0 L897.7 406.0ZM961.4 194.2 L1148.3 303.4 L1112.8 324.1 L1196.8 372.8 L801.0 604.1 L611.4 494.0 L640.4 475.1 L559.4 427.1 L693.7 348.5 L729.0 370.0 L877.6 283.6 L842.4 263.2ZM867.3 390.6 L913.0 364.2 L924.3 371.3 L879.5 397.2ZM886.1 401.4 L932.5 374.8 L943.8 381.8 L897.7 407.8Z" fill="none" stroke="#ff0000" stroke-width="4.4" stroke-linejoin="miter"/></g>
<g class="mul" transform="translate(0,0.0)"><path d="M1148.3 301.6 L961.4 192.4 L842.4 261.4 L844.0 262.3 L842.4 263.2 L876.0 282.7 L729.0 368.2 L693.7 346.7 L559.4 425.3 L560.9 426.2 L559.4 427.1 L639.0 474.2 L611.4 492.2 L612.9 493.0 L611.4 494.0 L801.0 604.1 L1196.8 372.8 L1195.3 371.9 L1196.8 371.0 L1114.3 323.2 L1148.3 303.4 L1146.8 302.5ZM879.5 395.4 L868.9 389.7 L913.0 364.2 L922.8 370.4ZM897.7 406.0 L887.7 400.5 L932.5 374.8 L942.3 380.9Z" fill="#403e40" fill-rule="evenodd"/></g>
<path d="M835.4 357.0 L861.4 383.0 M835.4 383.0 L861.4 357.0" stroke="#ff1010" stroke-width="1.3" fill="none"/>
<path d="M835.4 402.4 L861.4 428.4 M835.4 428.4 L861.4 402.4" stroke="#ff1010" stroke-width="1.3" fill="none"/>
<path d="M835.4 452.4 L861.4 478.4 M835.4 478.4 L861.4 452.4" stroke="#ff1010" stroke-width="1.3" fill="none"/>
<path d="M742 371V398M746.5 373V401M751 376V403M755.5 379V400" stroke="#e6e600" stroke-width="1.2" fill="none" opacity=".8"/>
<path d="M956.9 284.5h8.5v8.5h-8.5zM1143.8 393.7h8.5v8.5h-8.5zM1108.3 414.4h8.5v8.5h-8.5zM1192.3 463.1h8.5v8.5h-8.5zM796.5 694.4h8.5v8.5h-8.5zM606.9 584.3h8.5v8.5h-8.5zM635.9 565.4h8.5v8.5h-8.5zM554.9 517.4h8.5v8.5h-8.5zM689.2 438.8h8.5v8.5h-8.5zM724.5 460.3h8.5v8.5h-8.5zM873.1 373.9h8.5v8.5h-8.5zM837.9 353.5h8.5v8.5h-8.5zM956.9 234.1h8.5v8.5h-8.5zM1143.8 343.3h8.5v8.5h-8.5zM1108.3 364.0h8.5v8.5h-8.5zM1192.3 412.7h8.5v8.5h-8.5zM796.5 644.0h8.5v8.5h-8.5zM606.9 533.9h8.5v8.5h-8.5zM635.9 515.0h8.5v8.5h-8.5zM554.9 467.0h8.5v8.5h-8.5zM689.2 388.4h8.5v8.5h-8.5zM724.5 409.9h8.5v8.5h-8.5zM873.1 323.5h8.5v8.5h-8.5zM837.9 303.1h8.5v8.5h-8.5zM956.9 188.1h8.5v8.5h-8.5zM1143.8 297.3h8.5v8.5h-8.5zM1108.3 318.0h8.5v8.5h-8.5zM1192.3 366.7h8.5v8.5h-8.5zM796.5 598.0h8.5v8.5h-8.5zM606.9 487.9h8.5v8.5h-8.5zM635.9 469.0h8.5v8.5h-8.5zM554.9 421.0h8.5v8.5h-8.5zM689.2 342.4h8.5v8.5h-8.5zM724.5 363.9h8.5v8.5h-8.5zM873.1 277.5h8.5v8.5h-8.5zM837.9 257.1h8.5v8.5h-8.5z" fill="none" stroke="#000" stroke-width="1.3"/>
</svg>
<div class="vb1"></div><div class="vb2"></div>
<div class="legend" style="left:454px;top:37.2px">Slab Region</div>
<div class="legend" style="left:454px;top:60.2px;letter-spacing:.18px">Material, Thickness (in), Z-direction (in)</div>
<div class="sw" style="top:92px;height:22.5px;background:#d29f7f"></div>
<div class="sw" style="top:114.5px;height:22.7px;background:#7fd29f"></div>
<div class="sw" style="top:137.2px;height:22.3px;background:#ffff7f"></div>
<div class="legend" style="left:513.5px;top:94.3px;letter-spacing:.18px">Concrete 1: 8.00 in: 0.00 in</div>
<div class="legend" style="left:513.5px;top:117px;letter-spacing:.18px">Concrete 1: 7.00 in: 1.00 in</div>
<div class="legend" style="left:513.5px;top:139.5px;letter-spacing:.18px">Concrete 1: 9.00 in: 0.00 in</div>
</body></html>
